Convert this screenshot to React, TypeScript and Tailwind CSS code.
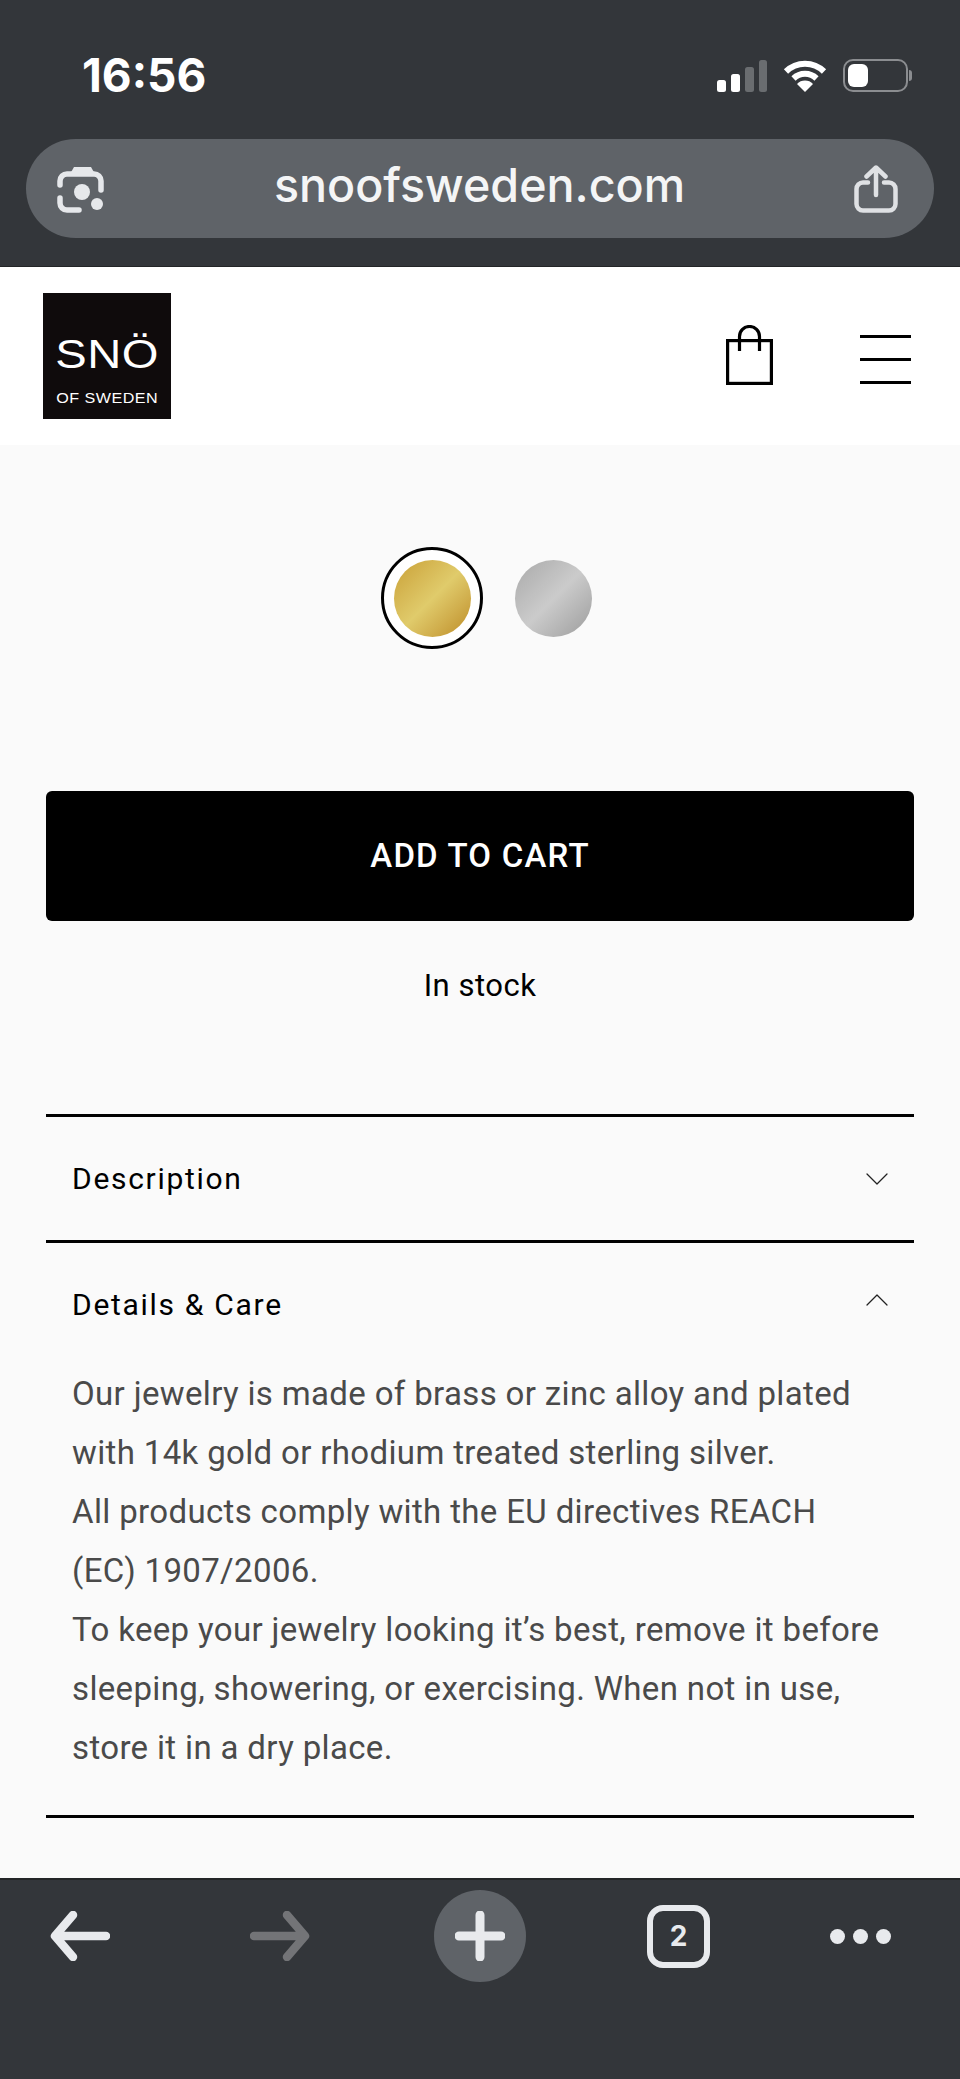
import React from 'react';
import { ChevronDown, ChevronUp } from 'lucide-react';

const Signal = () => (
  <svg width="50" height="32" viewBox="0 0 50 32">
    <rect x="0" y="20" width="9" height="12" rx="2.5" fill="#fff" />
    <rect x="14" y="14" width="9" height="18" rx="2.5" fill="#fff" />
    <rect x="28" y="7" width="9" height="25" rx="2.5" fill="#6a6d70" />
    <rect x="42" y="0" width="8" height="32" rx="2.5" fill="#6a6d70" />
  </svg>
);

const Wifi = () => (
  <svg width="44" height="32" viewBox="0 0 44 32">
    <path d="M3 11.5a27 27 0 0 1 38 0" fill="none" stroke="#fff" strokeWidth="6" />
    <path d="M10.5 18.5a16.5 16.5 0 0 1 23 0" fill="none" stroke="#fff" strokeWidth="6" />
    <path d="M22 32l-8-8a11 11 0 0 1 16 0z" fill="#fff" />
  </svg>
);

const Battery = () => (
  <div className="flex items-center gap-[1px]">
    <div className="flex h-[33px] w-[65px] items-center rounded-[10px] border-[2.5px] border-[#8b8d90] p-[3px]">
      <div className="h-full w-[20px] rounded-[6px] bg-white" />
    </div>
    <div className="h-[11px] w-[3px] rounded-r-full bg-[#8b8d90]" />
  </div>
);

const LensIcon = () => (
  <svg width="48" height="48" viewBox="0 0 48 48" fill="none" stroke="#e6e8eb" strokeWidth="5.5" strokeLinecap="round">
    <path d="M3 20v-4a7 7 0 0 1 7-7h27a7 7 0 0 1 7 7v9" />
    <path d="M3 33v5a7 7 0 0 0 7 7h12" />
    <path d="M13 9l4-7h17l4 7z" fill="#e6e8eb" stroke="none" />
    <circle cx="25" cy="27" r="8" fill="#e6e8eb" stroke="none" />
    <circle cx="40" cy="39" r="6" fill="#e6e8eb" stroke="none" />
  </svg>
);

const ShareIcon = () => (
  <svg width="44" height="48" viewBox="0 0 44 48" fill="none" stroke="#dfe1e4" strokeWidth="4.5" strokeLinecap="round" strokeLinejoin="round">
    <path d="M22 30V3M12.5 11.5 22 2.5l9.5 9" />
    <path d="M14 17.5H9a6.5 6.5 0 0 0-6.5 6.5v15A6.5 6.5 0 0 0 9 45.5h26a6.5 6.5 0 0 0 6.5-6.5V24a6.5 6.5 0 0 0-6.5-6.5h-5" />
  </svg>
);

const BagIcon = () => (
  <svg width="47" height="60" viewBox="0 0 47 60" fill="none" stroke="#000" strokeWidth="3.2" className="mb-[2px]">
    <rect x="1.6" y="15.6" width="43.8" height="42.8" />
    <path d="M13.5 26V11.5a10 10 0 0 1 20 0V26" />
  </svg>
);

const NavArrow = ({ flip, color }: { flip?: boolean; color: string }) => (
  <svg width="60" height="50" viewBox="0 0 60 50" fill="none" stroke={color} strokeWidth="8.5" strokeLinecap="round" strokeLinejoin="round" className={flip ? '-scale-x-100' : ''}>
    <path d="M56 25H5M23 4 5 25l18 21" />
  </svg>
);

const AccordionRow = ({ label, open }: { label: string; open?: boolean }) => (
  <div className="flex h-[123px] items-center justify-between pl-[26px] pr-[17px]">
    <span className="text-[30px] tracking-[1.7px] text-black">{label}</span>
    {open ? (
      <ChevronUp size={40} strokeWidth={0.75} color="#222" className="-translate-y-[5px]" />
    ) : (
      <ChevronDown size={40} strokeWidth={0.75} color="#222" />
    )}
  </div>
);

export default function App() {
  return (
    <div className="flex h-[2079px] w-[960px] flex-col overflow-hidden bg-[#fafafa] font-['Roboto',sans-serif]">
      {/* Browser top */}
      <div className="h-[267px] shrink-0 border-b border-[#232527] bg-[#33363a] pl-[26px] pr-[26px]">
        <div className="flex h-[139px] items-start justify-between pl-[56px] pr-[22px] pt-[52px]">
          <span className="font-['Inter',sans-serif] text-[46px] font-bold leading-[46px] text-white">16:56</span>
          <div className="flex items-center gap-[16px] pt-[7px]">
            <Signal />
            <Wifi />
            <Battery />
          </div>
        </div>
        <div className="flex h-[99px] items-center justify-between rounded-[50px] bg-[#5f6368] pl-[31px] pr-[36px]">
          <LensIcon />
          <span className="-mt-[6px] font-['Inter',sans-serif] text-[46.6px] font-medium leading-none text-[#f4f5f6]">snoofsweden.com</span>
          <ShareIcon />
        </div>
      </div>

      {/* Site header */}
      <div className="flex h-[178px] shrink-0 items-center justify-between bg-white pl-[43px] pr-[49px]">
        <div className="flex h-[126px] w-[128px] flex-col items-center justify-end bg-[#0f0b0c] pb-[13px] text-white">
          <span className="scale-x-[1.15] font-['Liberation_Sans',sans-serif] text-[41px] leading-[46px] tracking-[0.5px]">SNÖ</span>
          <span className="mt-[13px] scale-x-[1.15] font-['Liberation_Sans',sans-serif] text-[14px] leading-[16px] tracking-[0.4px]">OF SWEDEN</span>
        </div>
        <div className="flex items-center gap-[87px]">
          <BagIcon />
          <div className="mt-[7px] flex w-[51px] flex-col gap-[20px]">
            <div className="h-[3px] bg-black" />
            <div className="h-[3px] bg-black" />
            <div className="h-[3px] bg-black" />
          </div>
        </div>
      </div>

      {/* Product */}
      <div className="min-h-0 flex-1 pl-[46px] pr-[46px]">
        <div className="flex items-center justify-center gap-[32px] pl-[13px] pt-[102px]">
          <div className="flex h-[102px] w-[102px] items-center justify-center rounded-full border-[3px] border-black bg-white">
            <div className="h-[77px] w-[77px] rounded-full bg-gradient-to-br from-[#c9a034] via-[#e0cb6b] to-[#bd8c22]" />
          </div>
          <div className="h-[77px] w-[77px] rounded-full bg-gradient-to-br from-[#a9a9a9] via-[#cbcbcb] to-[#9c9c9c]" />
        </div>

        <div className="mt-[142px] flex h-[130px] items-center justify-center rounded-[6px] bg-black text-[33px] font-medium tracking-[1.2px] text-white">
          ADD TO CART
        </div>
        <p className="mt-[46px] text-center text-[31px] leading-[38px] tracking-[0.5px] text-black">In stock</p>

        <div className="mt-[109px] border-t-[3px] border-black">
          <AccordionRow label="Description" />
        </div>
        <div className="border-t-[3px] border-black">
          <AccordionRow label="Details & Care" open />
          <div className="-mt-[2px] pb-[38px] pl-[26px] pr-[30px] text-[33px] leading-[59px] tracking-[0.35px] text-[#4a4a4a]">
            <p>Our jewelry is made of brass or zinc alloy and plated with 14k gold or rhodium treated sterling silver.</p>
            <p>All products comply with the EU directives REACH (EC) 1907/2006.</p>
            <p>To keep your jewelry looking it’s best, remove it before sleeping, showering, or exercising. When not in use, store it in a dry place.</p>
          </div>
        </div>
        <div className="border-t-[3px] border-black" />
      </div>

      {/* Browser bottom */}
      <div className="h-[201px] shrink-0 border-t-2 border-[#232527] bg-[#33363a]">
        <div className="flex items-center pl-[50px] pt-[10px]">
          <NavArrow color="#e8eaed" />
          <div className="ml-[140px]"><NavArrow flip color="#737477" /></div>
          <div className="ml-[124px] flex h-[92px] w-[92px] items-center justify-center rounded-full bg-[#5f6368]">
            <svg width="50" height="50" viewBox="0 0 50 50" stroke="#e8eaed" strokeWidth="9" strokeLinecap="round">
              <path d="M25 4v42M4 25h42" />
            </svg>
          </div>
          <div className="ml-[121px] flex h-[63px] w-[63px] items-center justify-center rounded-[16px] border-[6px] border-[#e8eaed] font-['Inter',sans-serif] text-[28px] font-bold text-[#e8eaed]">2</div>
          <div className="ml-[120px] flex gap-[8px]">
            <div className="h-[15px] w-[15px] rounded-full bg-[#e8eaed]" />
            <div className="h-[15px] w-[15px] rounded-full bg-[#e8eaed]" />
            <div className="h-[15px] w-[15px] rounded-full bg-[#e8eaed]" />
          </div>
        </div>
      </div>
    </div>
  );
}
